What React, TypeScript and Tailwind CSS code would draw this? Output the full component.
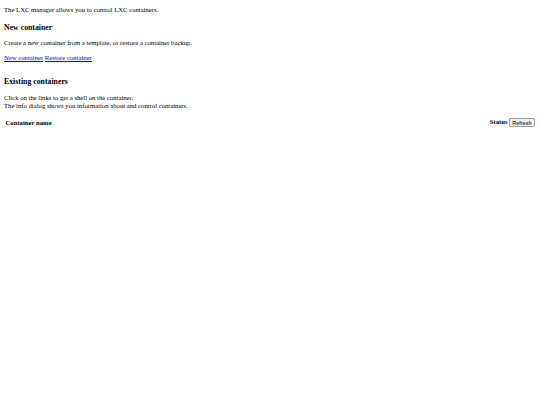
export default function App() {
  return (
    <div className="min-h-[405px] w-[540px] bg-white px-[4px] text-[6.7px] leading-[7.5px] text-black" style={{ fontFamily: '"Liberation Serif", "Times New Roman", serif' }}>
      <p className="pt-[6px]">The LXC manager allows you to control LXC containers.</p>

      <h3 className="mt-[9px] text-[7.8px] font-bold leading-[9px]">New container</h3>
      <p className="mt-[7px]">Create a new container from a template, or restore a container backup.</p>
      <p className="mt-[7.5px]">
        <a href="#" className="text-[#0000ee] underline">New container</a>{" "}
        <a href="#" className="text-[#0000ee] underline">Restore container</a>
      </p>

      <h3 className="mt-[16px] text-[7.8px] font-bold leading-[9px]">Existing containers</h3>
      <p className="mt-[8px]">
        Click on the links to get a shell on the container.
        <br />
        The info dialog shows you information about and control containers.
      </p>

      <table className="mt-[8px] w-full border-separate border-spacing-[1px]">
        <thead>
          <tr>
            <th className="px-[0.5px] text-left font-bold">Container name</th>
            <th className="px-[0.5px] text-right font-bold">
              Status{" "}
              <button className="rounded-[1px] border border-[#a0a0a0] bg-[#efefef] px-[2px] py-[0.5px] align-middle text-[5.5px] font-normal leading-[6px]" style={{ fontFamily: '"Liberation Sans", Arial, sans-serif' }}>
                Refresh
              </button>
            </th>
          </tr>
        </thead>
        <tbody />
      </table>
    </div>
  );
}
